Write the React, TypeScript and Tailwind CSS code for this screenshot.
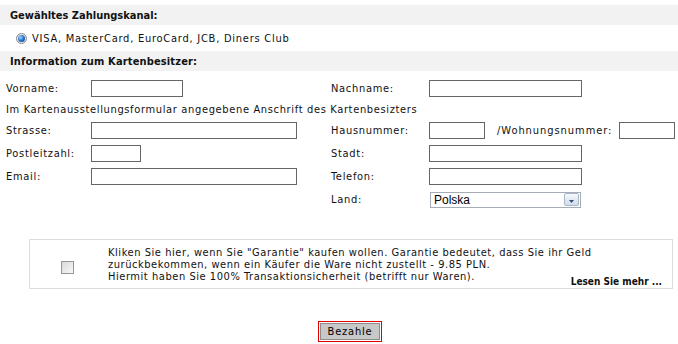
import React from 'react';

const font = { fontFamily: '"DejaVu Sans Condensed", "DejaVu Sans", sans-serif' };

function Field({ w }: { w: string }) {
  return <div className={`h-[17px] ${w} border border-[#666] bg-white`} />;
}

export default function App() {
  return (
    <div className="w-[678px] h-[344px] bg-white text-[11px] text-[#111] leading-none relative tracking-[0.7px]" style={font}>
      {/* Kanal */}
      <div className="mt-[5px] h-[20px] bg-[#f2f2f2] pl-[10px] flex items-center font-bold tracking-normal">Gewähltes Zahlungskanal:</div>
      <div className="h-[26px] flex items-center pl-[16px]">
        <span className="w-[11px] h-[11px] rounded-full border border-[#8a8a8a] bg-[#e8e8e8] flex items-center justify-center">
          <span className="w-[7px] h-[7px] rounded-full bg-[radial-gradient(circle_at_35%_35%,#9fd0ff,#1763c0_60%,#0a3c80)]" />
        </span>
        <span className="ml-[5px] tracking-[0.75px]">VISA, MasterCard, EuroCard, JCB, Diners Club</span>
      </div>

      {/* Karteninhaber */}
      <div className="h-[20px] bg-[#f2f2f2] pl-[10px] flex items-center font-bold tracking-[0.15px]">Information zum Kartenbesitzer:</div>

      <div className="pl-[6px] pt-[9px]">
        <div className="flex items-center h-[17px]">
          <div className="w-[85px]">Vorname:</div>
          <Field w="w-[92px]" />
          <div className="ml-[148px] w-[98px]">Nachname:</div>
          <Field w="w-[153px]" />
        </div>
        <div className="h-[25px] flex items-center tracking-[0.65px]">Im Kartenausstellungsformular angegebene Anschrift des Kartenbesizters</div>
        <div className="flex items-center h-[17px]">
          <div className="w-[85px]">Strasse:</div>
          <Field w="w-[206px]" />
          <div className="ml-[34px] w-[98px]">Hausnummer:</div>
          <Field w="w-[56px]" />
          <div className="ml-[12px] w-[122px] tracking-[0.95px]">/Wohnungsnummer:</div>
          <Field w="w-[56px]" />
        </div>
        <div className="flex items-center h-[17px] mt-[6px]">
          <div className="w-[85px]">Postleitzahl:</div>
          <Field w="w-[50px]" />
          <div className="ml-[190px] w-[98px]">Stadt:</div>
          <Field w="w-[153px]" />
        </div>
        <div className="flex items-center h-[17px] mt-[6px]">
          <div className="w-[85px]">Email:</div>
          <Field w="w-[206px]" />
          <div className="ml-[34px] w-[98px]">Telefon:</div>
          <Field w="w-[153px]" />
        </div>
        <div className="flex items-center h-[17px] mt-[6px]">
          <div className="ml-[325px] w-[99px]">Land:</div>
          <div className="w-[151px] h-[16px] border border-[#a5acb5] flex items-center justify-between pl-[3px] pr-[1px] tracking-normal">
            <span className="text-[12px] text-black" style={{ fontFamily: '"Liberation Sans", Arial, sans-serif' }}>Polska</span>
            <span className="w-[15px] h-[13px] rounded-[2px] border border-[#a9b6c8] bg-[linear-gradient(#f6f8fb,#d4dce8)] flex items-end justify-center pb-[2px]">
              <svg width="5" height="3" viewBox="0 0 5 3"><path d="M0 0h5L2.5 3z" fill="#2f4f80" /></svg>
            </span>
          </div>
        </div>
      </div>

      {/* Garantie */}
      <div className="ml-[29px] mt-[31px] w-[644px] h-[50px] border border-[#dcdcdc] flex relative">
        <div className="w-[78px] flex items-center justify-center">
          <span className="w-[13px] h-[13px] border border-[#979797] bg-[linear-gradient(135deg,#d8d8d8,#f8f8f8)] mt-[6px] mr-[3px]" />
        </div>
        <div className="pt-[7px] leading-[12px] tracking-[0.55px]">
          <div>Kliken Sie hier, wenn Sie "Garantie" kaufen wollen. Garantie bedeutet, dass Sie ihr Geld</div>
          <div>zurückbekommen, wenn ein Käufer die Ware nicht zustellt - 9.85 PLN.</div>
          <div>Hiermit haben Sie 100% Transaktionsicherheit (betrifft nur Waren).</div>
        </div>
        <div className="absolute right-[10px] bottom-[1px] font-bold text-[10px] tracking-normal">Lesen Sie mehr ...</div>
      </div>

      {/* Button */}
      <div className="mt-[32px] flex justify-center pl-[22px]">
        <div className="border border-[#e00000] p-[1px]">
          <button className="w-[60px] h-[17px] bg-[#c8c8c8] border border-[#8c8c8c] text-[11px] text-black flex items-center justify-center tracking-[0.8px]">Bezahle</button>
        </div>
      </div>
    </div>
  );
}
